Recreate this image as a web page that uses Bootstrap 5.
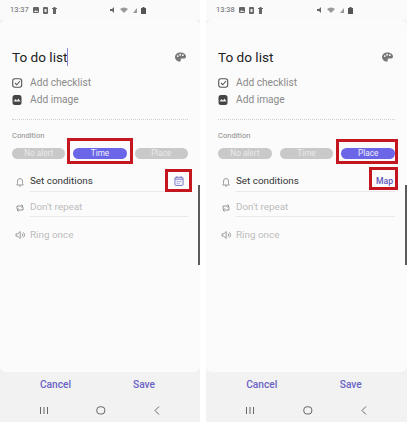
<!DOCTYPE html>
<html lang="en"><head><meta charset="utf-8"><title>To do list</title>
<link href="https://cdn.jsdelivr.net/npm/bootstrap@5.3.0/dist/css/bootstrap.min.css" rel="stylesheet">
<style>
html,body{margin:0;background:#fff;width:407px;height:422px;overflow:hidden;font-family:Roboto,"Liberation Sans",sans-serif}
.stage{width:407px;height:422px;gap:6px}
.phone{position:relative;height:422px;background:#f2f2f2;overflow:hidden}
.phone-a{width:200px}.phone-b{width:201px}
.stat{height:20px;padding:0 54px 0 10px;font-size:7.5px;color:#666;background:#fafafa;gap:4px}
.stat svg{display:block}
.sheet{height:352px;background:#fbfbfb;border-radius:6px;padding:0 12px}
.ttl{margin-top:26px;height:22px;font-size:13.6px;line-height:22px;color:#222}
.ttl svg{margin-right:2px}
.caret{display:inline-block;width:1px;height:18px;background:#8d87d8;vertical-align:-4px}
.addrow{height:17px;font-size:10.2px;color:#8a8a8a;gap:6px}
.addrow svg,.setrow svg{flex:none}
.addgap{margin-top:6px}
.dots{border-top:1px dotted #cfcfcf;margin-top:11px;height:0}
.cond{font-size:7.6px;color:#8b8b8b;margin-top:11px;line-height:10px}
.pills{gap:8px;margin-top:7px}
.pilly{flex:1;height:11px;border-radius:6px;background:#c9c9c9;color:#e9e9e9;font-size:8.2px;line-height:11px;text-align:center}
.pilly.on{background:#6b66e8;color:#f1f1f8}
.setrow{font-size:9.9px;gap:5px;color:#bbb}
.setrow>svg{margin-left:3px}
.setbody{flex:1;border-bottom:1px solid #e9e9e9;height:100%}
.r1{height:21px;margin-top:12px;color:#333}
.r2{height:25px;padding-top:7px}
.r3{height:27px;padding-top:9px}
.r3 .setbody{border:0}
.calico{margin-right:4px}
.maplink{font-size:8.6px;font-weight:500;color:#5b56b8;margin-right:2px}
.bar{height:30px;font-size:10.2px;font-weight:500;color:#6a64c4;padding-bottom:4px}
.bar div{width:50%;text-align:center}
.bar .cancel{padding-left:11px}
.bar .save{padding-right:12px}
.navb{height:20px;padding:0 38px 3px}
.mark-a{position:absolute;border:3px solid #c4161f;pointer-events:none}
.scr{position:absolute;right:0;top:185px;width:2px;height:80px;background:#5c5c5c}
</style></head><body>
<div class="stage d-flex">

<div class="phone phone-a d-flex flex-column">
 <div class="stat d-flex align-items-center">
  <span>13:37</span>
  <svg width="6" height="6" viewBox="0 0 6 6"><rect width="6" height="6" rx="1" fill="#666"/><path d="M1 5l1.500-2L4 4.500l.7-.7L5.500 5z" fill="#eee"/></svg>
  <svg width="5" height="7" viewBox="0 0 5 7"><rect width="5" height="7" rx="1" fill="#666"/><rect x="1.500" y="2" width="2" height="3" fill="#eee"/></svg>
  <svg width="5" height="7" viewBox="0 0 5 7"><path d="M1 1h3v6H1zM0 1h5v1H0zM1.500 0h2v1h-2z" fill="#666"/></svg>
  <div class="flex-grow-1"></div>
  <svg width="6" height="6" viewBox="0 0 6 6"><path d="M0 2h2l2-2v6L2 4H0z" fill="#666"/></svg>
  <svg width="9" height="6" viewBox="0 0 9 6"><path d="M0 2a6 6 0 0 1 8 0L4 6z" fill="#999"/></svg>
  <svg width="4" height="6" viewBox="0 0 4 6"><path d="M0 6l4-5v5z" fill="#999"/></svg>
  <svg width="5" height="7" viewBox="0 0 5 7"><path d="M1.500 0h2v1H5v6H0V1h1.500z" fill="#555"/></svg>
 </div>
 <div class="sheet">
  <div class="ttl d-flex justify-content-between align-items-center">
   <span>To do list<span class="caret"></span></span>
   <svg width="11" height="10" viewBox="0 0 12 10"><path d="M6 0C2.500 0 0 2.200 0 5s2.500 5 5 5c1.500 0 1.500-1 1.200-1.800C6 7 7 6.500 8 6.500h2.200C11.400 6.500 12 5.500 12 4.500 12 2 9.500 0 6 0z" fill="#777"/><circle cx="3" cy="4" r="1" fill="#fbfbfb"/><circle cx="5.500" cy="2.500" r="1" fill="#fbfbfb"/><circle cx="8.500" cy="3" r="1" fill="#fbfbfb"/></svg>
  </div>
  <div class="addrow addgap d-flex align-items-center">
   <svg width="12" height="10" viewBox="0 0 12 10"><rect x=".7" y=".7" width="9" height="8.600" rx="2.200" fill="none" stroke="#555" stroke-width="1.100"/><path d="M3 5l1.800 1.800L8 3" fill="none" stroke="#555" stroke-width="1.100"/></svg>
   <span>Add checklist</span>
  </div>
  <div class="addrow d-flex align-items-center">
   <svg width="12" height="10" viewBox="0 0 12 10"><rect x=".5" width="9" height="10" rx="2.500" fill="#444"/><path d="M1.500 6.500L3.500 4 5 5.500 6.500 3.500l2 3z" fill="#eee"/></svg>
   <span>Add image</span>
  </div>
  <div class="dots"></div>
  <div class="cond">Condition</div>
  <div class="pills d-flex"><div class="pilly">No alert</div><div class="pilly on">Time</div><div class="pilly">Place</div></div>
  <div class="setrow r1 d-flex align-items-center">
   <svg width="10" height="10" viewBox="0 0 10 10"><path d="M5 1.500a2.500 2.500 0 0 0-2.500 2.500V6.500L1.800 8h6.400l-.7-1.500V4A2.500 2.500 0 0 0 5 1.500zM4 9h2" fill="none" stroke="#888" stroke-width=".8"/></svg>
   <div class="setbody d-flex align-items-center justify-content-between"><span>Set conditions</span>
   <svg class="calico" width="10" height="10" viewBox="0 0 11 12"><rect x=".6" y="1.500" width="9.800" height="9.900" rx="1.500" fill="#eef" stroke="#6a68b8" stroke-width="1"/><path d="M.6 3.800h9.800M3 .5v2M8 .5v2" stroke="#6a68b8" fill="none"/><path d="M3.500 6v1M5.500 6v1M7.500 6v1M3.500 8.300v1M5.500 8.300v1" stroke="#6a68b8" stroke-width=".9"/></svg></div>
  </div>
  <div class="setrow r2 d-flex align-items-center">
   <svg width="10" height="10" viewBox="0 0 10 10"><path d="M2 6V3h6M6.500 1.500L8 3 6.500 4.500M8 4v3H2M3.500 5.500L2 7l1.500 1.500" fill="none" stroke="#888" stroke-width=".9"/></svg>
   <div class="setbody d-flex align-items-center"><span>Don't repeat</span></div>
  </div>
  <div class="setrow r3 d-flex align-items-center">
   <svg width="10" height="10" viewBox="0 0 10 10"><path d="M1 3.800h1.800L5.200 1.500v7L2.800 6.200H1zM7 3.500a2 2 0 0 1 0 3M8.200 2.300a3.500 3.500 0 0 1 0 5.400" fill="none" stroke="#888" stroke-width=".8"/></svg>
   <div class="setbody d-flex align-items-center"><span>Ring once</span></div>
  </div>
 </div>
 <div class="bar d-flex align-items-center"><div class="cancel">Cancel</div><div class="save">Save</div></div>
 <div class="navb d-flex align-items-center justify-content-between">
  <svg width="12" height="9" viewBox="0 0 12 9"><path d="M2.500 1v7M6 1v7M9.500 1v7" stroke="#666"/></svg>
  <svg width="10" height="9" viewBox="0 0 10 9"><rect x=".8" y=".8" width="8" height="7.200" rx="3" fill="none" stroke="#666" stroke-width="1"/></svg>
  <svg width="10" height="9" viewBox="0 0 10 9"><path d="M7 .5L3 4.500l4 4" fill="none" stroke="#666" stroke-width="1"/></svg>
 </div>
 <div class="mark-a" style="left:67px;top:138px;width:66px;height:26px"></div>
 <div class="mark-a" style="left:165px;top:169px;width:27px;height:23px"></div>
 <div class="scr"></div>
</div>

<div class="phone phone-b d-flex flex-column">
 <div class="stat d-flex align-items-center">
  <span>13:38</span>
  <svg width="6" height="6" viewBox="0 0 6 6"><rect width="6" height="6" rx="1" fill="#666"/><path d="M1 5l1.500-2L4 4.500l.7-.7L5.500 5z" fill="#eee"/></svg>
  <svg width="5" height="7" viewBox="0 0 5 7"><rect width="5" height="7" rx="1" fill="#666"/><rect x="1.500" y="2" width="2" height="3" fill="#eee"/></svg>
  <svg width="5" height="7" viewBox="0 0 5 7"><path d="M1 1h3v6H1zM0 1h5v1H0zM1.500 0h2v1h-2z" fill="#666"/></svg>
  <div class="flex-grow-1"></div>
  <svg width="6" height="6" viewBox="0 0 6 6"><path d="M0 2h2l2-2v6L2 4H0z" fill="#666"/></svg>
  <svg width="9" height="6" viewBox="0 0 9 6"><path d="M0 2a6 6 0 0 1 8 0L4 6z" fill="#999"/></svg>
  <svg width="4" height="6" viewBox="0 0 4 6"><path d="M0 6l4-5v5z" fill="#999"/></svg>
  <svg width="5" height="7" viewBox="0 0 5 7"><path d="M1.500 0h2v1H5v6H0V1h1.500z" fill="#555"/></svg>
 </div>
 <div class="sheet">
  <div class="ttl d-flex justify-content-between align-items-center">
   <span>To do list</span>
   <svg width="11" height="10" viewBox="0 0 12 10"><path d="M6 0C2.500 0 0 2.200 0 5s2.500 5 5 5c1.500 0 1.500-1 1.200-1.800C6 7 7 6.500 8 6.500h2.200C11.400 6.500 12 5.500 12 4.500 12 2 9.500 0 6 0z" fill="#777"/><circle cx="3" cy="4" r="1" fill="#fbfbfb"/><circle cx="5.500" cy="2.500" r="1" fill="#fbfbfb"/><circle cx="8.500" cy="3" r="1" fill="#fbfbfb"/></svg>
  </div>
  <div class="addrow addgap d-flex align-items-center">
   <svg width="12" height="10" viewBox="0 0 12 10"><rect x=".7" y=".7" width="9" height="8.600" rx="2.200" fill="none" stroke="#555" stroke-width="1.100"/><path d="M3 5l1.800 1.800L8 3" fill="none" stroke="#555" stroke-width="1.100"/></svg>
   <span>Add checklist</span>
  </div>
  <div class="addrow d-flex align-items-center">
   <svg width="12" height="10" viewBox="0 0 12 10"><rect x=".5" width="9" height="10" rx="2.500" fill="#444"/><path d="M1.500 6.500L3.500 4 5 5.500 6.500 3.500l2 3z" fill="#eee"/></svg>
   <span>Add image</span>
  </div>
  <div class="dots"></div>
  <div class="cond">Condition</div>
  <div class="pills d-flex"><div class="pilly">No alert</div><div class="pilly">Time</div><div class="pilly on">Place</div></div>
  <div class="setrow r1 d-flex align-items-center">
   <svg width="10" height="10" viewBox="0 0 10 10"><path d="M5 1.500a2.500 2.500 0 0 0-2.500 2.500V6.500L1.800 8h6.400l-.7-1.500V4A2.500 2.500 0 0 0 5 1.500zM4 9h2" fill="none" stroke="#888" stroke-width=".8"/></svg>
   <div class="setbody d-flex align-items-center justify-content-between"><span>Set conditions</span><span class="maplink">Map</span></div>
  </div>
  <div class="setrow r2 d-flex align-items-center">
   <svg width="10" height="10" viewBox="0 0 10 10"><path d="M2 6V3h6M6.500 1.500L8 3 6.500 4.500M8 4v3H2M3.500 5.500L2 7l1.500 1.500" fill="none" stroke="#888" stroke-width=".9"/></svg>
   <div class="setbody d-flex align-items-center"><span>Don't repeat</span></div>
  </div>
  <div class="setrow r3 d-flex align-items-center">
   <svg width="10" height="10" viewBox="0 0 10 10"><path d="M1 3.800h1.800L5.200 1.500v7L2.800 6.200H1zM7 3.500a2 2 0 0 1 0 3M8.200 2.300a3.500 3.500 0 0 1 0 5.400" fill="none" stroke="#888" stroke-width=".8"/></svg>
   <div class="setbody d-flex align-items-center"><span>Ring once</span></div>
  </div>
 </div>
 <div class="bar d-flex align-items-center"><div class="cancel">Cancel</div><div class="save">Save</div></div>
 <div class="navb d-flex align-items-center justify-content-between">
  <svg width="12" height="9" viewBox="0 0 12 9"><path d="M2.500 1v7M6 1v7M9.500 1v7" stroke="#666"/></svg>
  <svg width="10" height="9" viewBox="0 0 10 9"><rect x=".8" y=".8" width="8" height="7.200" rx="3" fill="none" stroke="#666" stroke-width="1"/></svg>
  <svg width="10" height="9" viewBox="0 0 10 9"><path d="M7 .5L3 4.500l4 4" fill="none" stroke="#666" stroke-width="1"/></svg>
 </div>
 <div class="mark-a" style="left:130px;top:139px;width:62px;height:25px"></div>
 <div class="mark-a" style="left:163px;top:167px;width:29px;height:23px"></div>
 <div class="scr"></div>
</div>

</div>
<script src="https://cdn.jsdelivr.net/npm/bootstrap@5.3.0/dist/js/bootstrap.bundle.min.js"></script>
</body></html>
